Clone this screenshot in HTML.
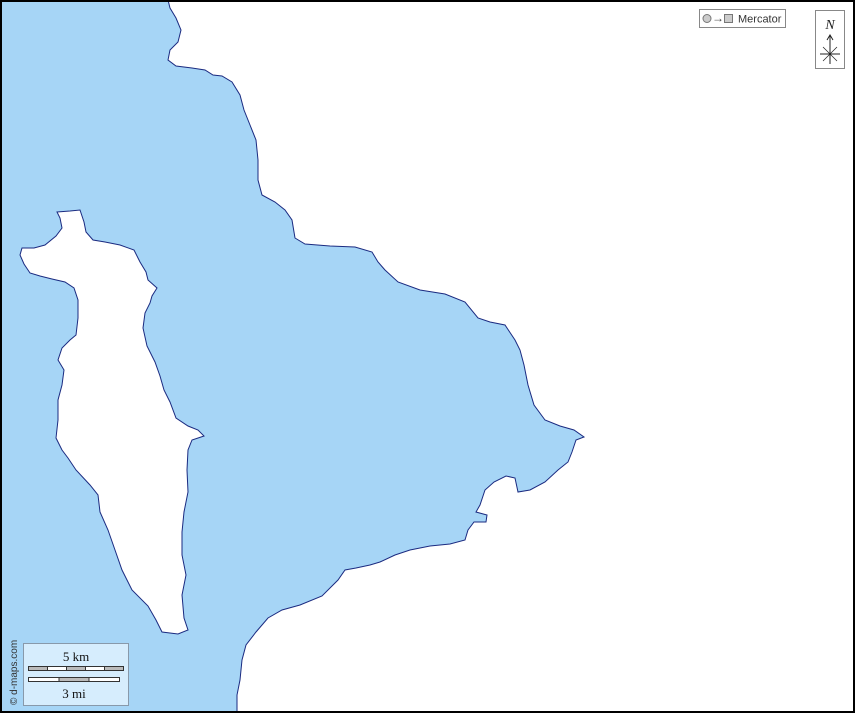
<!DOCTYPE html>
<html><head><meta charset="utf-8"><style>
html,body{margin:0;padding:0;background:#fff}
svg{display:block}
.s{font-family:"Liberation Sans",sans-serif}
.r{font-family:"Liberation Serif",serif}
</style></head><body>
<svg width="855" height="713" viewBox="0 0 855 713" xmlns="http://www.w3.org/2000/svg">
<rect x="0" y="0" width="855" height="713" fill="#fff"/>
<path d="M0,0 L168,0 L170,8 L176,18 L181,30 L178,42 L170,50 L168,60 L176,66 L192,68 L205,70 L213,75 L222,76 L232,82 L240,95 L244,110 L250,125 L256,140 L258,160 L258,180 L262,195 L275,202 L285,210 L292,220 L295,238 L305,244 L330,246 L355,247 L372,252 L378,262 L385,270 L398,282 L420,290 L445,294 L465,302 L478,318 L490,322 L505,325 L515,340 L520,350 L524,365 L528,385 L534,405 L545,420 L560,426 L574,430 L584,437 L576,440 L572,452 L568,462 L558,470 L545,482 L530,490 L518,492 L515,478 L506,476 L494,482 L485,490 L480,505 L476,512 L487,515 L486,522 L474,522 L468,530 L465,540 L450,544 L430,546 L410,550 L395,555 L380,562 L370,565 L356,568 L345,570 L338,580 L322,596 L300,605 L282,610 L268,618 L256,632 L246,645 L242,660 L240,680 L237,695 L237,713 L0,713 Z" fill="#a6d5f6" stroke="#1a2a80" stroke-width="1"/>
<path d="M57,212 L70,211 L80,210 L84,222 L86,232 L93,240 L105,242 L120,245 L134,250 L140,262 L146,272 L148,280 L157,288 L152,296 L150,303 L145,313 L143,328 L147,346 L155,362 L160,376 L164,390 L170,402 L176,418 L188,426 L198,430 L204,436 L192,440 L188,450 L187,470 L188,492 L184,512 L182,532 L182,555 L186,575 L182,595 L184,618 L188,630 L178,634 L162,632 L156,620 L148,606 L132,590 L122,570 L115,550 L108,530 L100,512 L98,495 L90,485 L76,470 L68,458 L62,450 L56,438 L58,420 L58,400 L62,385 L64,370 L58,360 L62,348 L70,340 L76,335 L78,318 L78,300 L74,288 L65,282 L52,279 L40,276 L30,273 L24,264 L20,255 L22,248 L34,248 L45,245 L56,236 L62,228 L60,218 Z" fill="#fff" stroke="#1a2a80" stroke-width="1"/>
<rect x="1" y="1" width="853" height="711" fill="none" stroke="#000" stroke-width="2"/>
<rect x="699.5" y="9.5" width="86" height="18" fill="#fff" stroke="#888"/>
<circle cx="707" cy="18.5" r="4" fill="#ccc" stroke="#777"/>
<text x="712" y="22" class="s" font-size="12" fill="#444">→</text>
<rect x="724.5" y="14.5" width="8" height="8" fill="#ccc" stroke="#777"/>
<text x="738" y="22.5" class="s" font-size="11" fill="#333">Mercator</text>
<rect x="815.5" y="10.5" width="29" height="58" fill="#fff" stroke="#888"/>
<text x="830" y="29" text-anchor="middle" class="r" font-style="italic" font-size="14" fill="#222">N</text>
<line x1="830" y1="36" x2="830" y2="64" stroke="#222"/>
<path d="M827,40 L830,35 L833,40" fill="none" stroke="#222"/>
<line x1="820" y1="54" x2="840" y2="54" stroke="#222"/>
<line x1="823" y1="47" x2="837" y2="61" stroke="#222" stroke-width=".7"/>
<line x1="837" y1="47" x2="823" y2="61" stroke="#222" stroke-width=".7"/>
<rect x="23.5" y="643.5" width="105" height="62" fill="#d6edfd" stroke="#8899aa"/>
<text x="76" y="661" text-anchor="middle" class="r" font-size="13" fill="#111">5 km</text>
<rect x="28.5" y="666.5" width="95" height="4" fill="#fff" stroke="#333"/>
<rect x="28.5" y="666.5" width="19" height="4" fill="#bbb" stroke="#333"/>
<rect x="66.5" y="666.5" width="19" height="4" fill="#bbb" stroke="#333"/>
<rect x="104.5" y="666.5" width="19" height="4" fill="#bbb" stroke="#333"/>
<rect x="28.5" y="677.5" width="91" height="4" fill="#fff" stroke="#333"/>
<rect x="59" y="677.5" width="30" height="4" fill="#bbb" stroke="#333"/>
<text x="74" y="698" text-anchor="middle" class="r" font-size="13" fill="#111">3 mi</text>
<text transform="translate(17,705) rotate(-90)" class="s" font-size="10" fill="#333">© d-maps.com</text>
</svg>
</body></html>
